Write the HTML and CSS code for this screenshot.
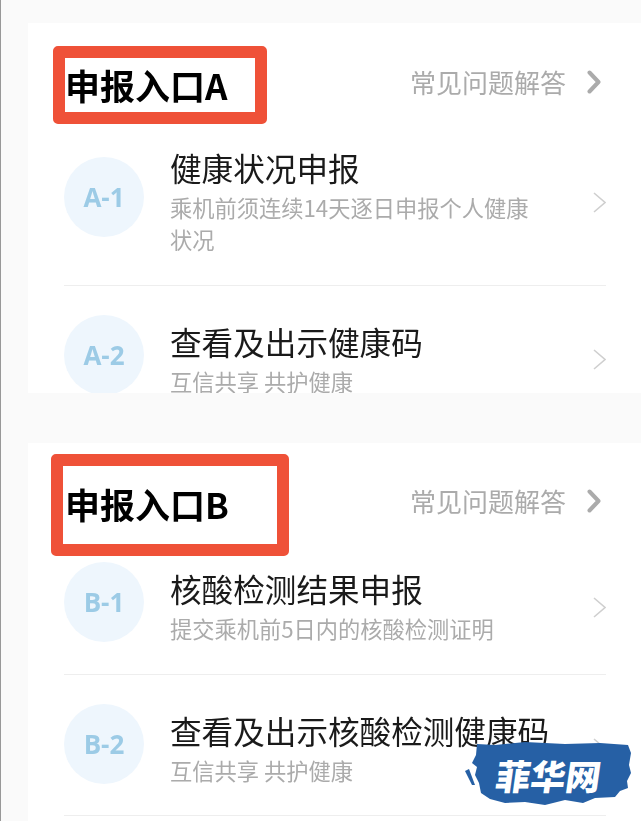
FILE: index.html
```html
<!DOCTYPE html>
<html lang="zh-CN">
<head>
<meta charset="utf-8">
<title>申报入口</title>
<link rel="stylesheet" href="styles.css">
</head>
<body>
<main class="page">
  <section class="card card-a">
    <div class="mark mark-a"></div>
    <header class="head">
      <h2 class="head-title">申报入口A</h2>
      <a class="more">常见问题解答
        <svg class="more-icon" viewBox="0 0 14 24"><path d="M2.5 2.5 11.5 12 2.5 21.5"/></svg>
      </a>
    </header>
    <div class="row">
      <div class="badge">A-1</div>
      <div class="text">
        <div class="title">健康状况申报</div>
        <div class="sub">乘机前须连续14天逐日申报个人健康状况</div>
      </div>
      <svg class="chev" viewBox="0 0 13 21"><path d="M1 1 12 10.5 1 20"/></svg>
    </div>
    <div class="row">
      <div class="badge">A-2</div>
      <div class="text">
        <div class="title">查看及出示健康码</div>
        <div class="sub">互信共享 共护健康</div>
      </div>
      <svg class="chev" viewBox="0 0 13 21"><path d="M1 1 12 10.5 1 20"/></svg>
    </div>
  </section>

  <section class="card card-b">
    <div class="mark mark-b"></div>
    <header class="head head-b">
      <h2 class="head-title">申报入口B</h2>
      <a class="more">常见问题解答
        <svg class="more-icon" viewBox="0 0 14 24"><path d="M2.5 2.5 11.5 12 2.5 21.5"/></svg>
      </a>
    </header>
    <div class="row">
      <div class="badge">B-1</div>
      <div class="text">
        <div class="title">核酸检测结果申报</div>
        <div class="sub">提交乘机前5日内的核酸检测证明</div>
      </div>
      <svg class="chev" viewBox="0 0 13 21"><path d="M1 1 12 10.5 1 20"/></svg>
    </div>
    <div class="row">
      <div class="badge">B-2</div>
      <div class="text">
        <div class="title">查看及出示核酸检测健康码</div>
        <div class="sub">互信共享 共护健康</div>
      </div>
      <svg class="chev" viewBox="0 0 13 21"><path d="M1 1 12 10.5 1 20"/></svg>
    </div>
  </section>
</main>

<aside class="stamp">
  <svg class="stamp-brush" viewBox="0 0 168 68" preserveAspectRatio="none">
    <path d="M12 3 30 4 60 1 100 3 135 2 163 4 166 12 164 24 166 32 162 40 163 47 155 50 150 56 130 57 118 62 100 59 80 64 60 61 40 62 25 58 16 52 14 42 10 34 12 26 7 22 11 14Z"/>
    <path d="M0 30 4 28 10 44 7 44Z"/>
  </svg>
  <span class="stamp-text">菲华网</span>
</aside>
</body>
</html>
```

FILE: styles.css
```css
* {
  box-sizing: border-box;
}

html,
body {
  margin: 0;
  height: 821px;
  overflow: hidden;
  background: #fafafa;
}

body {
  position: relative;
  font-family: "Noto Sans CJK SC", "Noto Sans", sans-serif;
  color: #1a1a1a;
}

.page {
  height: 821px;
  padding: 23px 0 0 27px;
  border-left: 1px solid #989898;
  filter: blur(0.4px);
}

.card {
  position: relative;
  background: #fff;
  padding: 0 35px 0 36px;
  overflow: hidden;
}

.card-a {
  height: 370px;
  margin-bottom: 50px;
}

.card-b {
  height: 378px;
}

.mark {
  position: absolute;
  border: 12px solid #ef5138;
  border-radius: 5px;
}

.mark-a {
  left: 25px;
  top: 23px;
  width: 214px;
  height: 78px;
}

.mark-b {
  left: 23px;
  top: 11px;
  width: 238px;
  height: 102px;
}

.head {
  position: relative;
  display: flex;
  align-items: center;
  justify-content: space-between;
  height: 55px;
  margin-top: 34px;
  padding: 0 5px 0 1px;
}

.head-b {
  margin-top: 33px;
  margin-bottom: 2px;
}

.head-title {
  margin: 0;
  font-size: 35px;
  line-height: 44px;
  font-weight: 700;
  color: #000;
}

.more {
  display: flex;
  align-items: center;
  gap: 21px;
  margin-bottom: 6px;
  font-size: 26px;
  line-height: 40px;
  color: #ababab;
}

.more-icon {
  width: 14px;
  height: 24px;
}

.more-icon path {
  fill: none;
  stroke: #ababab;
  stroke-width: 4;
  stroke-linecap: round;
  stroke-linejoin: round;
}

.row {
  display: flex;
  align-items: center;
  padding: 37px 0 29.5px;
  border-bottom: 1px solid #eeeeee;
}

.badge {
  flex: none;
  display: flex;
  align-items: center;
  justify-content: center;
  width: 80px;
  height: 80px;
  margin: -8px 26px 2px 0;
  border-radius: 50%;
  background: #eef6fd;
  color: #9ccbe6;
  font-family: "Open Sans", sans-serif;
  font-size: 26px;
  font-weight: 700;
}

.text {
  flex: 1;
  min-width: 0;
}

.title {
  font-size: 31.6px;
  line-height: 36px;
  color: #1a1a1a;
  white-space: nowrap;
}

.sub {
  max-width: 370px;
  margin-top: 6px;
  font-size: 22.25px;
  line-height: 32px;
  color: #ababab;
}

.chev {
  flex: none;
  width: 13px;
  height: 21px;
}

.chev path {
  fill: none;
  stroke: #cfcfcf;
  stroke-width: 1.6;
}

.stamp {
  position: absolute;
  left: 465px;
  top: 741px;
  width: 168px;
  height: 68px;
  display: flex;
  align-items: center;
  justify-content: flex-end;
  padding: 0 32px 0 0;
}

.stamp-brush {
  position: absolute;
  inset: 0;
  width: 100%;
  height: 100%;
}

.stamp-brush path {
  fill: #2660a5;
}

.stamp-text {
  position: relative;
  font-family: "Noto Sans CJK SC", sans-serif;
  font-size: 35px;
  line-height: 40px;
  font-weight: 900;
  color: #fff;
  transform: skewX(-8deg);
}
```
